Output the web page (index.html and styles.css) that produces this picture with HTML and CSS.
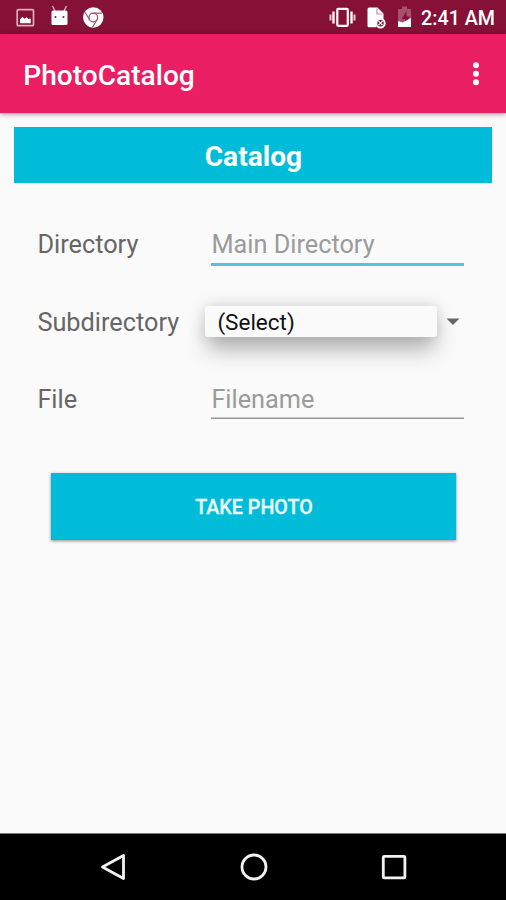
FILE: index.html
```html
<!DOCTYPE html>
<html lang="en">
<head>
<meta charset="utf-8">
<title>PhotoCatalog</title>
<link rel="stylesheet" href="styles.css">
</head>
<body>
<div class="screen">
  <div class="status">
    <svg class="status-left" width="110" height="34" viewBox="0 0 110 34">
      <rect x="17.2" y="9.700" width="16.300" height="16" rx="1" fill="none" stroke="#dfabbd" stroke-width="1.700"/>
      <path d="M20 23.200v-4l2.500-2.500 2 2 2-1.500 2 1.800 2.200-.500v4.700z" fill="#fff"/>
      <path d="M52.500 6l2.500 5M66.500 6l-2.500 5" stroke="#dfabbd" stroke-width="1.400"/>
      <path d="M51.500 12q0-1.500 1.500-1.500h13q1.500 0 1.500 1.500v11.500q0 1.500-1.500 1.500H53q-1.500 0-1.500-1.500z" fill="#fff"/>
      <circle cx="55.500" cy="17" r="1" fill="#851136"/><circle cx="63.500" cy="17" r="1" fill="#851136"/>
      <circle cx="93.300" cy="17.500" r="10.200" fill="#fff"/>
      <g fill="none" stroke="#a84d6c" stroke-width="1.200"><circle cx="93.300" cy="17.500" r="4.300"/><path d="M93.300 13.200h8.500M89.600 19.700l-4.400-7.200M97 19.700l-4.500 7.500"/></g>
    </svg>
    <div class="status-right">
      <svg width="93" height="34" viewBox="-3 0 93 34">
        <g transform="translate(-2.500 0)" fill="none" stroke="#fff"><rect x="8.800" y="8.800" width="10.500" height="17" rx="1" stroke-width="2.200"/><path d="M5 11.500v12M23 11.500v12" stroke-width="2.400"/><path d="M2 14.500v6M26 14.500v6" stroke="#eccbd7" stroke-width="2"/></g>
        <path d="M38 7.500h8.500l6 6v5.500q-7 0-7.200 8.300H38q-1.500 0-1.500-1.500V9q0-1.500 1.500-1.500z" fill="#fff"/>
        <path d="M46 8.500v5.500h5.500" fill="none" stroke="#c68ba0" stroke-width="1.200"/>
        <circle cx="49.500" cy="23.200" r="4.200" fill="#851136" stroke="#fff" stroke-width="2"/><path d="M47.500 21.200l4 4m0-4l-4 4" stroke="#fff" stroke-width="1.200"/>
        <path d="M67 9h4V6.500h5V9h4v18H67z" fill="#a95070"/>
        <path d="M75.500 11l-5 8h3.500v5.500l5-8h-3.500z" fill="#851136"/>
        <path d="M67 21l4.500 1.500 8.500-4.500v9H67z" fill="#fff"/>
      </svg>
      <span class="clock">2:41 AM</span>
    </div>
  </div>
  <header class="appbar">
    <h1>PhotoCatalog</h1>
    <svg width="8" height="26" viewBox="0 0 8 26"><g fill="#fff"><circle cx="4" cy="4.200" r="3"/><circle cx="4" cy="12.700" r="3"/><circle cx="4" cy="21.200" r="3"/></g></svg>
  </header>
  <main class="content">
    <h2>Catalog</h2>
    <form class="form">
      <div class="row"><span class="label">Directory</span><div class="field focused">Main Directory</div></div>
      <div class="row"><span class="label">Subdirectory</span>
        <div class="spinner"><div class="select">(Select)</div><svg width="14" height="8" viewBox="0 0 14 8"><path d="M.5.500h13L7 7z" fill="#666"/></svg></div></div>
      <div class="row"><span class="label">File</span><div class="field">Filename</div></div>
    </form>
    <button class="photo">TAKE PHOTO</button>
  </main>
  <nav class="nav">
    <svg width="28" height="28" viewBox="0 0 28 28"><path d="M24.500 2.500v23L3.500 14z"/></svg>
    <svg width="28" height="28" viewBox="0 0 28 28"><circle cx="14" cy="14" r="12"/></svg>
    <svg width="28" height="28" viewBox="0 0 28 28"><rect x="3.300" y="3.300" width="21.600" height="21.600" rx="1"/></svg>
  </nav>
</div>
</body>
</html>
```
FILE: styles.css
```css
* { box-sizing: border-box; }
body { margin: 0; font-family: Roboto, sans-serif; }
.screen { width: 506px; height: 900px; display: flex; flex-direction: column; background: #fafafa; overflow: hidden; }
.status { height: 34px; display: flex; justify-content: space-between; background: #851136; color: #fff; }
.status svg { display: block; }
.status-right { display: flex; align-items: center; padding-right: 11px; }
.clock { font-size: 19.7px; font-weight: 500; line-height: 34px; padding-top: 3px; white-space: nowrap; }
.appbar { height: 79px; flex: none; display: flex; align-items: center; justify-content: space-between; padding: 0 26px 0 23.300px; background: #e91e63; color: #fff; box-shadow: 0 1px 5px rgba(0, 0, 0, .4); }
h1 { margin: 5px 0 0; font-size: 28.1px; font-weight: 500; line-height: 34px; }
.content { flex: 1; display: flex; flex-direction: column; padding: 14px 13.600px 0 14.400px; }
h2 { margin: 0; height: 56px; line-height: 60px; text-align: center; color: #fff; background: #00bcd9; font-size: 28.1px; font-weight: 700; }
.form { margin: 22.500px 0 0; padding: 0 28px 0 23px; }
.row { height: 77.500px; display: flex; align-items: center; }
.label { width: 174px; flex: none; padding-top: 2px; font-size: 25.3px; line-height: 30px; color: #666; }
.field { flex: 1; height: 39px; line-height: 40px; font-size: 25.3px; color: #9b9b9b; box-shadow: 0 -1.500px 0 #969696 inset; }
.focused { height: 43px; line-height: 43px; box-shadow: 0 -3px 0 #58c3d8 inset; }
.spinner { flex: 1; display: flex; align-items: center; gap: 9px; margin-left: -6px; padding: 1px 4px 0 0; }
.select { flex: 1; height: 31px; margin-top: -2px; padding-left: 12px; line-height: 32px; font-size: 22.5px; color: #111; background: #fafafa; border-radius: 3px; box-shadow: 0 16px 22px -3px rgba(0, 0, 0, .28), 0 0 16px rgba(0, 0, 0, .18); }
.photo { width: 405px; height: 67px; margin: 35px 0 0 36.600px; padding: 3px 0 0 1px; border: 0; color: #e8fafd; background: #00bcd9; font: 500 19.7px/24px Roboto, sans-serif; box-shadow: 0 1px 3px rgba(0, 0, 0, .45); -webkit-text-stroke: .3px #e8fafd; }
.nav { height: 67px; flex: none; display: flex; align-items: center; justify-content: center; gap: 112.500px; padding-left: 1px; background: #000; border-top: 1px solid #777; }
.nav svg { fill: none; stroke: #f2f2f2; stroke-width: 2.800; stroke-linejoin: round; }
```
